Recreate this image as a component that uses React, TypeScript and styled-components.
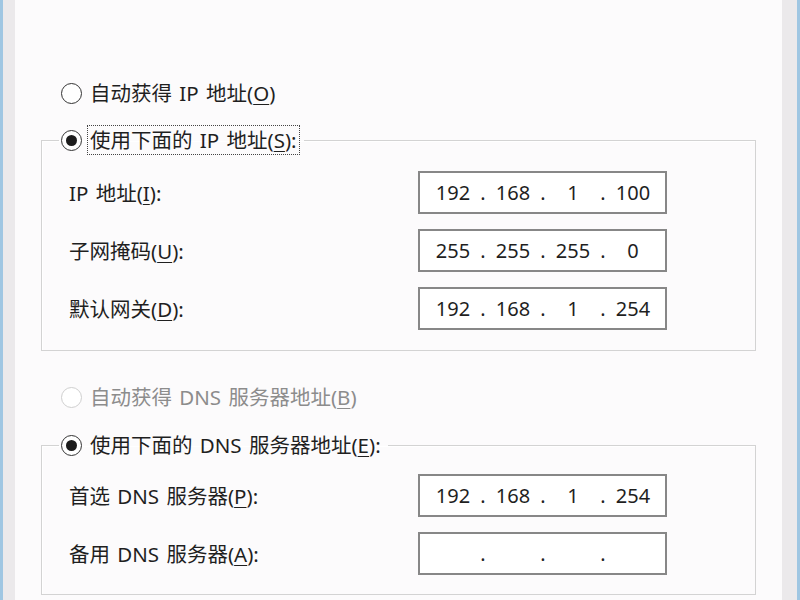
import React from "react";
import styled, { createGlobalStyle, css } from "styled-components";

const Global = createGlobalStyle`
  html, body { margin: 0; padding: 0; background: #fcfbfc; }
  body {
    font-family: "Noto Sans", "Noto Sans CJK SC", sans-serif;
    font-size: 20.5px;
    word-spacing: 2px;
    color: #1f1f1f;
  }
  * { box-sizing: border-box; }
`;

const Window = styled.div`
  display: flex;
  width: 800px;
  height: 600px;
  overflow: hidden;
  background: #fcfbfc;
`;

const Frame = styled.div<{ $side: "left" | "right" }>`
  flex: 0 0 ${(p) => (p.$side === "left" ? "15px" : "18px")};
  background: #ebe9eb;
  ${(p) =>
    p.$side === "left"
      ? css`border-left: 3px solid #9fc6e2;`
      : css`border-right: 3px solid #9fc6e2;`}
`;

const Content = styled.div`
  flex: 1;
  display: flex;
  flex-direction: column;
  padding: 78px 26px 0 26px;
`;

const RadioRow = styled.div<{ $top?: number }>`
  display: flex;
  align-items: center;
  height: 30px;
  padding-left: 20px;
  gap: 7px;
  margin-top: ${(p) => p.$top ?? 0}px;
`;

const RadioCircle = styled.span<{ $checked?: boolean; $disabled?: boolean }>`
  flex: 0 0 auto;
  width: 21px;
  height: 21px;
  border-radius: 50%;
  border: 1.6px solid ${(p) => (p.$disabled ? "#cfcfcf" : "#333333")};
  background: #ffffff;
  display: flex;
  align-items: center;
  justify-content: center;
  &::after {
    content: "";
    display: ${(p) => (p.$checked ? "block" : "none")};
    width: 11px;
    height: 11px;
    border-radius: 50%;
    background: #1c1c1c;
  }
`;

const RadioText = styled.span<{ $disabled?: boolean; $focus?: boolean }>`
  display: inline-block;
  height: 30px;
  line-height: 28px;
  padding: 0 2px;
  margin-left: -2px;
  white-space: nowrap;
  color: ${(p) => (p.$disabled ? "#8c8c8c" : "#1f1f1f")};
  border: 1px dotted ${(p) => (p.$focus ? "#444444" : "transparent")};
`;

const Key = styled.u`
  text-decoration-thickness: 1px;
  text-underline-offset: 3px;
`;

const Group = styled.fieldset<{ $top: number }>`
  margin: ${(p) => p.$top}px 0 0 0;
  padding: 0;
  width: 715px;
  border: 1px solid #d3d3d3;
  box-shadow: inset 1px 1px 0 #ffffff;
  min-inline-size: 0;
`;

const Legend = styled.legend`
  display: flex;
  align-items: center;
  gap: 7px;
  height: 30px;
  margin-left: 17px;
  padding: 0 4px 0 2px;
`;

const Fields = styled.div<{ $padTop: number; $padBottom: number }>`
  display: grid;
  grid-template-columns: 349px 249px;
  grid-auto-rows: 43px;
  row-gap: 15px;
  padding: ${(p) => p.$padTop}px 0 ${(p) => p.$padBottom}px 27px;
`;

const FieldLabel = styled.span`
  align-self: center;
  white-space: nowrap;
  line-height: 28px;
`;

const IpBox = styled.div`
  display: flex;
  align-items: center;
  height: 43px;
  padding-left: 8px;
  border: 2px solid #878787;
  background: #ffffff;
  font-size: 20px;
  word-spacing: 0;
`;

const Segment = styled.span`
  width: 50px;
  text-align: center;
  line-height: 28px;
`;

const Dot = styled.span`
  width: 10px;
  text-align: center;
  line-height: 28px;
`;

function IpField({ value }: { value: string[] }) {
  return (
    <IpBox>
      {value.map((v, i) => (
        <React.Fragment key={i}>
          {i > 0 && <Dot>.</Dot>}
          <Segment>{v}</Segment>
        </React.Fragment>
      ))}
    </IpBox>
  );
}

export default function App() {
  return (
    <>
      <Global />
      <Window>
        <Frame $side="left" />
        <Content>
          <RadioRow>
            <RadioCircle />
            <RadioText>
              自动获得 IP 地址(<Key>O</Key>)
            </RadioText>
          </RadioRow>

          <Group $top={17}>
            <Legend>
              <RadioCircle $checked />
              <RadioText $focus>
                使用下面的 IP 地址(<Key>S</Key>):
              </RadioText>
            </Legend>
            <Fields $padTop={16} $padBottom={20}>
              <FieldLabel>
                IP 地址(<Key>I</Key>):
              </FieldLabel>
              <IpField value={["192", "168", "1", "100"]} />
              <FieldLabel>
                子网掩码(<Key>U</Key>):
              </FieldLabel>
              <IpField value={["255", "255", "255", "0"]} />
              <FieldLabel>
                默认网关(<Key>D</Key>):
              </FieldLabel>
              <IpField value={["192", "168", "1", "254"]} />
            </Fields>
          </Group>

          <RadioRow $top={31}>
            <RadioCircle $disabled />
            <RadioText $disabled>
              自动获得 DNS 服务器地址(<Key>B</Key>)
            </RadioText>
          </RadioRow>

          <Group $top={18}>
            <Legend>
              <RadioCircle $checked />
              <RadioText>
                使用下面的 DNS 服务器地址(<Key>E</Key>):
              </RadioText>
            </Legend>
            <Fields $padTop={14} $padBottom={19}>
              <FieldLabel>
                首选 DNS 服务器(<Key>P</Key>):
              </FieldLabel>
              <IpField value={["192", "168", "1", "254"]} />
              <FieldLabel>
                备用 DNS 服务器(<Key>A</Key>):
              </FieldLabel>
              <IpField value={["", "", "", ""]} />
            </Fields>
          </Group>
        </Content>
        <Frame $side="right" />
      </Window>
    </>
  );
}
